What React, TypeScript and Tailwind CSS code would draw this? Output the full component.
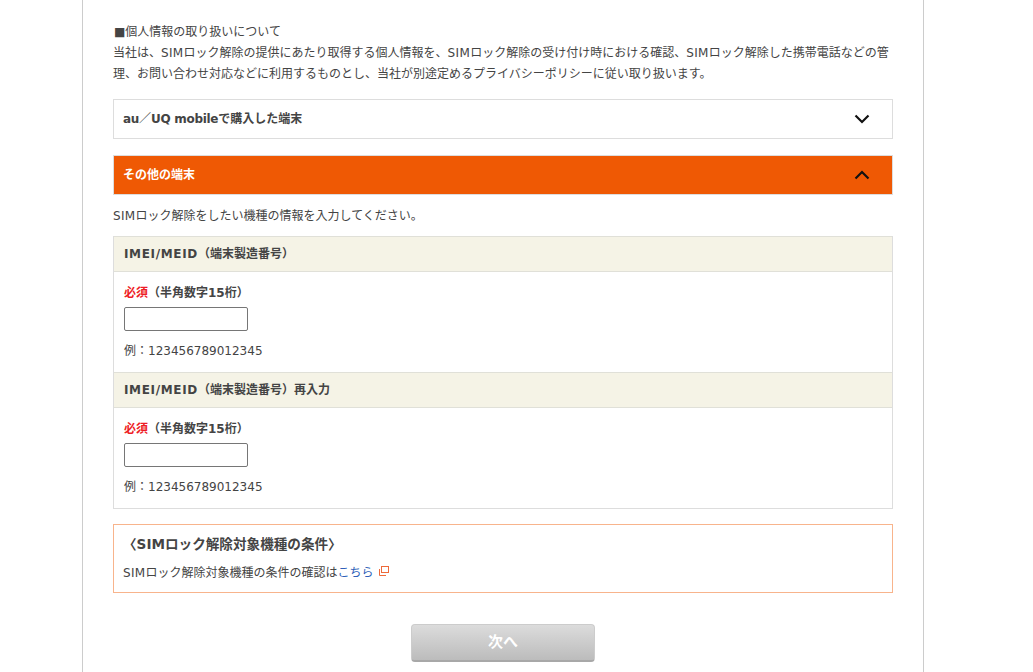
import React from "react";

function Chevron({ up }: { up?: boolean }) {
  return (
    <svg width="16" height="10" viewBox="0 0 16 10" fill="none" stroke="#111" strokeWidth="2.2">
      <path d={up ? "M1.5 8.5 L8 2 L14.5 8.5" : "M1.5 1.5 L8 8 L14.5 1.5"} />
    </svg>
  );
}

function Sim() {
  return <span className="tracking-[0.35px]">SIM</span>;
}

function Field({ suffix }: { suffix?: string }) {
  return (
    <>
      <div className="h-[36px] flex items-center px-[10px] bg-[#f5f3e6] border-y border-[#e0e0d8] font-bold">
        <span>
          <span className="tracking-[0.65px]">IMEI/MEID</span>（端末製造番号）{suffix}
        </span>
      </div>
      <div className="h-[100px] px-[10px] pt-[11px]">
        <p className="h-[20px] leading-[20px] font-bold">
          <span className="text-[#ee1c25]">必須</span>（半角数字15桁）
        </p>
        <input
          type="text"
          className="block mt-[4px] w-[124px] h-[24px] bg-white border border-[#767676] rounded-[2px]"
        />
        <p className="mt-[10px] h-[20px] leading-[20px]">例：123456789012345</p>
      </div>
    </>
  );
}

export default function App() {
  return (
    <div className="h-[672px] overflow-hidden bg-white text-[#444] text-[12px] font-['DejaVu_Sans','Noto_Sans_CJK_JP',sans-serif]">
      <div className="ml-[82px] w-[842px] h-full border-x border-[#ccc] px-[30px] pt-[22px]">
        <p className="leading-[21px] pl-[1px]">■個人情報の取り扱いについて</p>
        <p className="leading-[21px]">
          当社は、<Sim />ロック解除の提供にあたり取得する個人情報を、<Sim />ロック解除の受け付け時における確認、<Sim />ロック解除した携帯電話などの管理、お問い合わせ対応などに利用するものとし、当社が別途定めるプライバシーポリシーに従い取り扱います。
        </p>

        <div className="mt-[14px] h-[40px] border border-[#ddd] flex items-center justify-between pl-[9px] pr-[22px] font-bold">
          <span>
            <span className="tracking-[-0.3px]">au</span>／<span className="tracking-[-0.3px]">UQ mobile</span>で購入した端末
          </span>
          <Chevron />
        </div>
        <div className="mt-[16px] h-[40px] border border-[#ddd] bg-[#ef5904] text-white flex items-center justify-between pl-[9px] pr-[22px] font-bold">
          <span>その他の端末</span>
          <Chevron up />
        </div>
        <p className="mt-[11px] leading-[21px]">
          <Sim />ロック解除をしたい機種の情報を入力してください。
        </p>

        <div className="mt-[9px] border-x border-b border-[#ddd]">
          <Field />
          <Field suffix="再入力" />
        </div>

        <div className="mt-[15px] h-[69px] border border-[#f8b48c] px-[9px]">
          <p className="pt-[8px] leading-[22px] font-bold text-[13.6px]">〈SIMロック解除対象機種の条件〉</p>
          <p className="mt-[8px] leading-[20px] flex items-center">
            <Sim />ロック解除対象機種の条件の確認は<span className="text-[#2f5fb8]">こちら</span>
            <svg className="ml-[5px] mt-[-4px]" width="10" height="10" viewBox="0 0 10 10" fill="none" stroke="#ee6a3a" strokeWidth="1">
              <rect x="2.5" y="0.5" width="7" height="6" />
              <path d="M0.5 3 V9.5 H7" />
            </svg>
          </p>
        </div>

        <div className="mt-[31px] flex justify-center">
          <button className="w-[184px] h-[38px] rounded-[4px] bg-gradient-to-b from-[#dcdcdc] to-[#bcbcbc] border border-[#ccc] border-b-2 border-b-[#a8a8a8] text-white font-bold text-[15px]">
            次へ
          </button>
        </div>
      </div>
    </div>
  );
}
